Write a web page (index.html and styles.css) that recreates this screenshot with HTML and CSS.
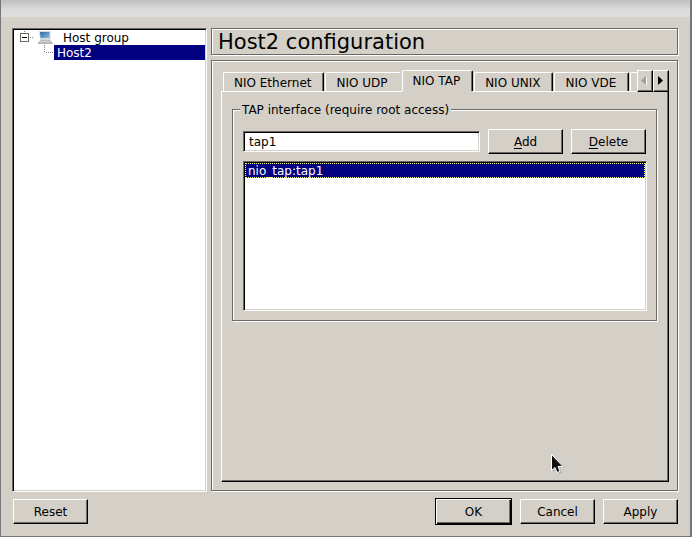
FILE: index.html
```html
<!DOCTYPE html>
<html lang="en">
<head>
<meta charset="utf-8">
<title>Host2 configuration</title>
<link rel="stylesheet" href="styles.css">
</head>
<body>
<div class="window">
  <header class="titlebar"></header>
  <main class="body">
    <ul class="tree" role="tree">
      <li class="tree-row" role="treeitem" aria-expanded="true">
        <svg class="tree-toggle" width="17" height="15" viewBox="0 0 17 15" shape-rendering="crispEdges">
          <path d="M4.500 1V3M10 7.500H14" stroke="#808080" stroke-dasharray="1 1"/>
          <rect x="0.500" y="3.500" width="8" height="8" fill="#fff" stroke="#6a6a62"/>
          <path d="M2 7.500H7" stroke="#000"/>
        </svg>
        <svg class="tree-icon" width="16" height="15" viewBox="0 0 16 15">
          <defs><linearGradient id="screen" x1="0" y1="0" x2="1" y2="1"><stop offset="0" stop-color="#2d68a4"/><stop offset="1" stop-color="#8fbade"/></linearGradient></defs>
          <path d="M2 1h11.500v9H3z" fill="#d5dbe0"/>
          <path d="M3 2h9.500v6H3.500z" fill="url(#screen)"/>
          <path d="M3 10h10.500l2 3H1z" fill="#d4d4d4"/>
          <path d="M3 10.500h10.500" stroke="#bbb"/>
          <path d="M1 12h14.500v2H1z" fill="#b8b8b8"/>
        </svg>
        <span class="tree-label">Host group</span>
      </li>
      <li class="tree-row tree-child" role="treeitem" aria-selected="true">
        <svg class="tree-branch" width="10" height="15" viewBox="0 0 10 15" shape-rendering="crispEdges">
          <path d="M0.500 0V8M2 7.500H10" stroke="#808080" stroke-dasharray="1 1"/>
        </svg>
        <span class="tree-selected">Host2</span>
      </li>
    </ul>
    <div class="content">
      <h1 class="heading etched">Host2 configuration</h1>
      <section class="panel etched">
        <div class="tabbar">
          <div class="tabs" role="tablist">
            <button class="tab" role="tab">NIO Ethernet</button>
            <button class="tab" role="tab">NIO UDP</button>
            <button class="tab tab-current" role="tab" aria-selected="true">NIO TAP</button>
            <button class="tab" role="tab">NIO UNIX</button>
            <button class="tab" role="tab">NIO VDE</button>
            <button class="tab" role="tab" aria-label="More"></button>
          </div>
          <button class="scroll" aria-label="Scroll left" disabled>
            <svg width="7" height="10" viewBox="0 0 7 10"><path d="M6 1v9L2 5.500z" fill="#fff"/><path d="M5 0v9L0 4.500z" fill="#a09f9b"/></svg>
          </button>
          <button class="scroll" aria-label="Scroll right">
            <svg width="7" height="10" viewBox="0 0 7 10"><path d="M1 0v9L6 4.500z" fill="#000"/></svg>
          </button>
        </div>
        <div class="page" role="tabpanel">
          <fieldset class="group">
            <legend>TAP interface (require root access)</legend>
            <div class="entry">
              <input class="field" type="text" value="tap1" aria-label="TAP interface">
              <button class="button"><u>A</u>dd</button>
              <button class="button"><u>D</u>elete</button>
            </div>
            <ul class="list" role="listbox" aria-label="Interfaces">
              <li class="list-selected" role="option" aria-selected="true">nio_tap:tap1</li>
            </ul>
          </fieldset>
        </div>
      </section>
    </div>
  </main>
  <footer class="actions">
    <button class="button reset">Reset</button>
    <button class="button default">OK</button>
    <button class="button">Cancel</button>
    <button class="button">Apply</button>
  </footer>
  <svg class="pointer" width="14" height="20" viewBox="0 0 14 20">
    <path d="M2 2v16l4-3 2 5 3-1-2-5 5-1z" fill="#000" opacity=".15"/>
    <path d="M.5.5v16l3.500-3 2 5 3-1.200-2-4.800H12z" fill="#111" stroke="#fff"/>
  </svg>
</div>
</body>
</html>
```
FILE: styles.css
```css
:root {
  --face: #d4d0c8;
  --dark: #6a6a65;
  --navy: #000080;
}

* { box-sizing: border-box; }

body {
  margin: 0;
  font: 12px/15px "DejaVu Sans", sans-serif;
  color: #000;
}

button, input {
  margin: 0;
  font: inherit;
  color: inherit;
  border-radius: 0;
}

ul { margin: 0; padding: 0; list-style: none; }

.window {
  position: relative;
  display: flex;
  flex-direction: column;
  min-height: 100vh;
  background: var(--face);
  border: solid #77777b;
  border-width: 0 2px 1px 1px;
}

.titlebar {
  height: 17px;
  background: linear-gradient(#c0c0c0, #dcdcdc 60%, #dedede);
}

.body {
  flex: 1;
  display: flex;
  gap: 4px;
  padding: 11px 11px 0;
}

.tree {
  flex: 0 0 195px;
  padding: 1px 0;
  background: #fff;
  border: 1px solid;
  border-color: var(--dark) #fff #fff var(--dark);
  box-shadow: inset 1px 1px #000, inset -1px -1px var(--face);
}

.tree-row {
  display: flex;
  height: 15px;
  padding: 0 1px 0 7px;
  line-height: 17px;
}

.tree-toggle, .tree-icon, .tree-branch { flex: none; }
.tree-label { margin-left: 10px; }
.tree-child { padding-left: 31px; }
.tree-selected { flex: 1; padding-left: 3px; background: var(--navy); color: #fff; }

.content {
  flex: 1;
  min-width: 0;
  display: flex;
  flex-direction: column;
  gap: 4px;
}

.etched {
  margin: 0 1px 1px 0;
  border: 1px solid var(--dark);
  box-shadow: 1px 1px #fff, inset 1px 1px #fff;
}

.heading {
  height: 27px;
  padding: 0 6px;
  font-size: 21px;
  font-weight: 400;
  line-height: 27px;
}

.panel {
  flex: 1;
  display: flex;
  flex-direction: column;
  padding: 9px 8px 8px 9px;
}

.tabbar { display: flex; height: 22px; margin-bottom: -1px; }

.tabs {
  flex: 1;
  min-width: 0;
  display: flex;
  align-items: flex-end;
  gap: 1px;
  padding: 0 0 1px 2px;
  overflow: clip;
}

.tab {
  flex: none;
  height: 19px;
  min-width: 24px;
  padding: 2px 12px 0 10px;
  background: var(--face);
  border: solid;
  border-width: 1px 1px 0 1px;
  border-color: #fff #000 #fff #fff;
  border-radius: 2px 2px 0 0;
  box-shadow: inset -1px 0 var(--dark);
  white-space: nowrap;
}

.tab:has(+ .tab-current) {
  border-right-color: transparent;
  box-shadow: none;
}

.tab-current {
  z-index: 1;
  height: 21px;
  padding-top: 1px;
  box-shadow: inset -1px 0 var(--dark), 0 1px var(--face);
}

.scroll {
  flex: none;
  display: grid;
  place-items: center;
  width: 16px;
  padding: 0 1px 1px 0;
  background: var(--face);
  border: 1px solid;
  border-color: #fff #000 #000 #fff;
  box-shadow: inset -1px -1px var(--dark);
  z-index: 1;
}

.page {
  flex: 1;
  padding: 9px 11px 10px 10px;
  border: 1px solid;
  border-color: #fff #000 #000 #fff;
  box-shadow: inset -1px -1px var(--dark);
}

.group {
  min-width: 0;
  margin: 0;
  padding: 11px 9px 9px 10px;
  border: 1px solid var(--dark);
  box-shadow: 1px 1px #fff, inset 1px 1px #fff;
}

.group legend {
  margin-left: -3px;
  padding: 2px 2px 0;
  background: var(--face);
}

.entry { display: flex; align-items: center; gap: 8px; padding-right: 1px; }

.field, .list {
  background: #fff;
  border: 1px solid;
  border-color: var(--dark) #fff #fff var(--dark);
  box-shadow: inset 1px 1px #000, inset -1px -1px var(--face);
}

.field { flex: 1; min-width: 0; height: 21px; padding: 0 5px; outline: 0; }

.button {
  width: 75px;
  height: 25px;
  padding: 1px 0 0;
  background: var(--face);
  border: 1px solid;
  border-color: #fff #000 #000 #fff;
  box-shadow: inset -1px -1px var(--dark);
}

.button u { text-underline-offset: 2px; }

.list { height: 150px; margin-top: 7px; padding: 1px; }

.list-selected {
  height: 15px;
  padding-left: 3px;
  background: var(--navy);
  color: #fff;
  line-height: 17px;
  outline: 1px dotted #ffff7f;
  outline-offset: -1px;
}

.actions {
  display: flex;
  align-items: center;
  gap: 8px;
  padding: 6px 12px 11px;
}

.reset { margin-right: auto; }

.default {
  width: 77px;
  height: 27px;
  border-color: #000;
  box-shadow: inset 1px 1px #fff, inset -1px -1px #000, inset -2px -2px var(--dark);
}

.pointer { position: absolute; left: 550px; top: 454px; pointer-events: none; }
```
